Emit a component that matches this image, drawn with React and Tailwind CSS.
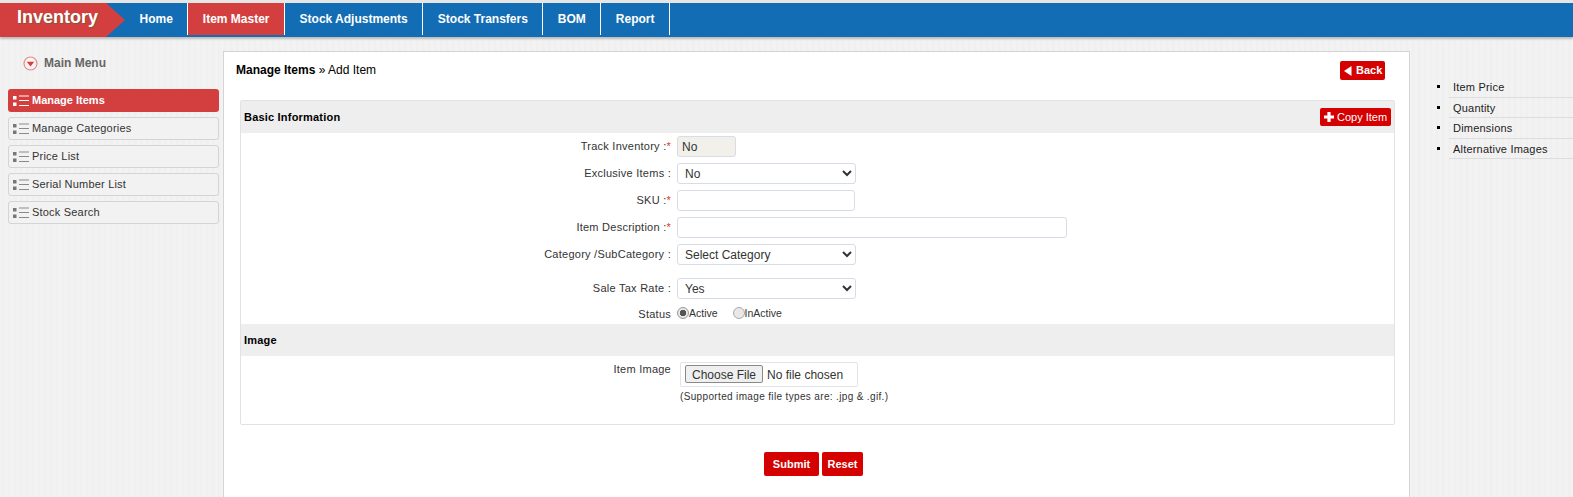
import React from 'react';

const menuItems = ['Manage Items', 'Manage Categories', 'Price List', 'Serial Number List', 'Stock Search'];
const navItems = ['Home', 'Item Master', 'Stock Adjustments', 'Stock Transfers', 'BOM', 'Report'];
const sideLinks = ['Item Price', 'Quantity', 'Dimensions', 'Alternative Images'];

function ListIcon({ active }) {
  const dot = active ? '#ffffff' : '#777777';
  const line = active ? '#ffffff' : '#8a8a8a';
  return (
    <svg width="16" height="12" viewBox="0 0 16 12" className="shrink-0">
      <rect x="0" y="1" width="3.5" height="3.5" fill={dot} />
      <rect x="0" y="7.5" width="3.5" height="3.5" fill={dot} />
      <rect x="6" y="0.5" width="10" height="1" fill={line} />
      <rect x="6" y="5" width="10" height="1" fill={line} />
      <rect x="6" y="10" width="10" height="1" fill={line} />
    </svg>
  );
}

function MenuCircle() {
  return (
    <svg width="15" height="15" viewBox="0 0 15 15" className="shrink-0">
      <circle cx="7.5" cy="7.5" r="6.5" fill="#fdf3f3" stroke="#e58a8a" strokeWidth="1.2" />
      <path d="M3.8 5.8 H11.2 L7.5 10.4 Z" fill="#d33f3f" />
    </svg>
  );
}

function Row({ label, required, className, children }) {
  return (
    <div className={`flex items-center ${className || ''}`}>
      <div className="w-[436px] pr-[6px] text-right text-[11px] tracking-[0.25px] text-[#333]">
        {label}
        {required && <span className="text-[#d33]">*</span>}
      </div>
      {children}
    </div>
  );
}

const fieldClass = 'h-[21px] rounded-[3px] border border-[#d8dce6] bg-white text-[12px] text-[#333]';

function SectionHeader({ title, children }) {
  return (
    <div className="flex items-center justify-between bg-[#eeeeee] pl-[3px] pr-[3px] text-[11px] font-bold tracking-[0.2px] text-black h-[32px]">
      <span>{title}</span>
      {children}
    </div>
  );
}

export default function App() {
  return (
    <div className="h-[497px] overflow-hidden bg-[#f1f1f1] bg-[repeating-linear-gradient(90deg,#f4f4f4_0px,#efefef_3px,#f3f3f3_6px)] font-['Liberation_Sans',Arial,sans-serif]">
      {/* Top bar */}
      <div className="h-[3px] bg-[#e6e6e6]"></div>
      <header className="relative flex h-[34px] items-stretch bg-[#136db4] shadow-[0_2px_2px_#bbbbbb]">
        <div className="w-[125px] bg-[#d33f3f] pl-[17px] pt-[2px] text-[18px] leading-[24px] font-bold text-white [clip-path:polygon(0_0,106px_0,125px_50%,106px_100%,0_100%)] [text-shadow:1px_1px_1px_#7a5a3a]">
          Inventory
        </div>
        <nav className="flex h-[32px] items-stretch text-[12px] font-bold text-white">
          {navItems.map((item) => (
            <a
              key={item}
              className={`flex items-center border-r border-white px-[14.5px] ${item === 'Item Master' ? 'bg-[#d33f3f]' : ''}`}
            >
              {item}
            </a>
          ))}
        </nav>
      </header>

      <div className="flex items-start">
        {/* Left menu */}
        <aside className="ml-[8px] w-[211px] shrink-0">
          <div className="flex h-[52px] items-start gap-[6px] pl-[15px] pt-[19px] text-[12px] leading-[15px] font-bold text-[#666]">
            <MenuCircle />
            <span>Main Menu</span>
          </div>
          <ul>
            {menuItems.map((item, i) => (
              <li
                key={item}
                className={
                  i === 0
                    ? 'mb-[5px] flex h-[23px] items-center gap-[3px] rounded-[3px] bg-[#d33f3f] pl-[5px] text-[11px] font-bold text-white'
                    : 'mb-[5px] flex h-[23px] items-center gap-[3px] rounded-[3px] border border-[#d4d4d4] bg-[#f2f2f2] pl-[4px] text-[11px] tracking-[0.2px] text-[#333]'
                }
              >
                <ListIcon active={i === 0} />
                {item}
              </li>
            ))}
          </ul>
        </aside>

        {/* Main panel */}
        <main className="ml-[4px] mt-[14px] h-[520px] w-[1187px] shrink-0 border border-[#d4d4d4] bg-white px-[16px]">
          <div className="flex items-start justify-between pr-[8px] pt-[9px]">
            <div className="pl-[-4px] text-[12px] leading-[18px] -ml-[4px] text-black">
              <b className="font-bold">Manage Items</b> » Add Item
            </div>
            <button className="flex h-[19px] w-[45px] items-center gap-[4px] rounded-[2px] bg-[#d50000] pl-[4px] text-[11px] font-bold text-white">
              <svg width="8" height="10" viewBox="0 0 8 10">
                <path d="M7.5 0 V10 L0 5 Z" fill="#fff" />
              </svg>
              Back
            </button>
          </div>

          <section className="mt-[20px] h-[325px] w-[1155px] rounded-[2px] border border-[#e2e2e2]">
            <SectionHeader title="Basic Information">
              <button className="flex h-[18px] w-[71px] items-center gap-[3px] rounded-[2px] bg-[#d50000] pl-[4px] text-[11px] font-normal tracking-normal text-white">
                <svg width="10" height="10" viewBox="0 0 10 10">
                  <path d="M3.4 0 H6.6 V3.4 H10 V6.6 H6.6 V10 H3.4 V6.6 H0 V3.4 H3.4 Z" fill="#fff" />
                </svg>
                Copy Item
              </button>
            </SectionHeader>

            <Row label="Track Inventory :" required className="mt-[3px]">
              <div className="flex h-[21px] w-[59px] items-center rounded-[3px] border border-[#d8dce6] bg-[#f1f0ea] pl-[4px] text-[12px] text-[#333]">
                No
              </div>
            </Row>
            <Row label="Exclusive Items :" className="mt-[6px]">
              <select className={`${fieldClass} w-[179px] pl-[3px]`} defaultValue="No">
                <option>No</option>
                <option>Yes</option>
              </select>
            </Row>
            <Row label="SKU :" required className="mt-[6px]">
              <input className={`${fieldClass} w-[178px]`} />
            </Row>
            <Row label="Item Description :" required className="mt-[6px]">
              <input className={`${fieldClass} w-[390px]`} />
            </Row>
            <Row label="Category /SubCategory :" className="mt-[6px]">
              <select className={`${fieldClass} w-[179px] pl-[3px]`}>
                <option>Select Category</option>
              </select>
            </Row>
            <Row label="Sale Tax Rate :" className="mt-[13px]">
              <select className={`${fieldClass} w-[179px] pl-[3px]`} defaultValue="Yes">
                <option>Yes</option>
                <option>No</option>
              </select>
            </Row>
            <Row label="Status" className="mt-[6px] h-[18px]">
              <label className="flex items-center text-[10.5px] text-[#333]">
                <input
                  type="radio"
                  name="status"
                  defaultChecked
                  className="mb-[3px] h-[12px] w-[12px] appearance-none rounded-full border border-[#999] bg-[#eee] checked:bg-[radial-gradient(circle,#555_0,#555_3px,#e8e8e8_3.5px)]"
                />
                Active
              </label>
              <label className="ml-[15px] flex items-center text-[10.5px] text-[#333]">
                <input
                  type="radio"
                  name="status"
                  className="mb-[3px] h-[12px] w-[12px] appearance-none rounded-full border border-[#aaa] bg-[#e8e8e8]"
                />
                InActive
              </label>
            </Row>

            <div className="mt-[1px]">
              <SectionHeader title="Image" />
            </div>
            <div className="flex items-start">
              <div className="w-[436px] pr-[6px] pt-[5px] text-right text-[11px] tracking-[0.25px] text-[#333]">
                Item Image
              </div>
              <div className="ml-[3px] pt-[6px]">
                <input
                  type="file"
                  className="block h-[25px] w-[178px] rounded-[2px] border border-[#e2e4ea] pl-[4px] pt-[2px] text-[12px] text-[#333] file:mr-[4px] file:h-[18px] file:rounded-[2px] file:border file:border-[#8a8a8a] file:bg-[#efefef] file:px-[6px] file:text-[12px]"
                />
                <div className="-ml-[0px] mt-[2px] text-[10px] tracking-[0.35px] text-[#333]">
                  (Supported image file types are: .jpg &amp; .gif.)
                </div>
              </div>
            </div>
          </section>

          <div className="mt-[27px] flex justify-center gap-[3px] pr-[6px] text-[11px] font-bold text-white">
            <button className="h-[24px] w-[55px] rounded-[2px] bg-[#d50000]">Submit</button>
            <button className="h-[24px] w-[41px] rounded-[2px] bg-[#d50000]">Reset</button>
          </div>
        </main>

        {/* Right links */}
        <ul className="ml-[27px] mt-[40px] flex-1 list-none text-[11px] tracking-[0.2px] text-[#222]">
          {sideLinks.map((link) => (
            <li key={link} className="relative ml-[12px] h-[20.6px] border-b border-[#dddddd] pl-[4px] leading-[20px]">
              <span className="absolute -left-[12px] top-[8px] h-[3px] w-[3px] bg-black"></span>
              {link}
            </li>
          ))}
        </ul>
      </div>
    </div>
  );
}
